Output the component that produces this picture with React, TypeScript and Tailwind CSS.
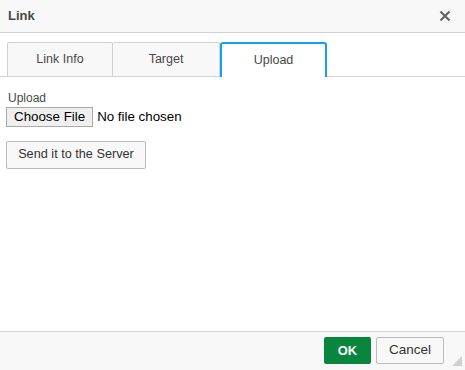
import React from "react";

export default function App() {
  return (
    <div
      className="w-[465px] h-[370px] bg-white flex flex-col text-[#484848] overflow-hidden"
      style={{ fontFamily: '"Liberation Sans", Arial, sans-serif' }}
    >
      <div className="h-[33px] bg-[#f8f8f8] border-b border-[#d1d1d1] flex items-center justify-between pl-[8px] pr-[14px] shrink-0">
        <span className="text-[13px] font-bold text-[#484848]">Link</span>
        <svg width="12" height="12" viewBox="0 0 12 12">
          <path d="M1.5 1.5 L10.5 10.5 M10.5 1.5 L1.5 10.5" stroke="#666" strokeWidth="2.2" />
        </svg>
      </div>
      <div className="flex items-end pt-[9px] pl-[7px] border-b border-[#d1d1d1] h-[44px] shrink-0">
        <div className="w-[106px] h-[34px] bg-[#f8f8f8] border border-b-0 border-[#d1d1d1] rounded-t-[2px] flex items-center justify-center text-[12.5px]">
          Link Info
        </div>
        <div className="w-[107px] h-[34px] bg-[#f8f8f8] border border-l-0 border-b-0 border-[#d1d1d1] rounded-t-[2px] flex items-center justify-center text-[12.5px]">
          Target
        </div>
        <div className="w-[107px] h-[35px] -mb-px bg-white border-2 border-b-0 border-[#139ff7] rounded-t-[3px] flex items-center justify-center text-[12.5px]">
          Upload
        </div>
      </div>
      <div className="flex-1 px-[6px] pt-[14px]">
        <div className="text-[12px] pl-[2px] leading-[14px]">Upload</div>
        <div className="flex items-center mt-[2px]">
          <div className="h-[20px] px-[7px] bg-[#efefef] border border-[#a9a9a9] flex items-center text-[13.33px] text-black leading-none">
            Choose File
          </div>
          <span className="ml-[4px] text-[13.33px] text-black">No file chosen</span>
        </div>
        <div className="mt-[14px] w-[140px] h-[28px] bg-[#f8f8f8] border border-[#bcbcbc] rounded-[2px] flex items-center justify-center text-[12.7px] text-[#333]">
          Send it to the Server
        </div>
      </div>
      <div className="h-[39px] bg-[#f8f8f8] border-t border-[#d1d1d1] shrink-0 relative flex items-start justify-end pt-[5px] pr-[21px] gap-[5px]">
        <div className="w-[47px] h-[27px] bg-[#09863e] rounded-[2px] flex items-center justify-center text-white text-[13px] font-bold">
          OK
        </div>
        <div className="w-[68px] h-[27px] bg-[#f8f8f8] border border-[#bcbcbc] rounded-[2px] flex items-center justify-center text-[13.5px] text-[#333]">
          Cancel
        </div>
        <svg className="absolute right-[3px] bottom-[4px]" width="10" height="10" viewBox="0 0 10 10">
          <path d="M10 0 L10 10 L0 10 Z" fill="#d0d0d0" />
        </svg>
      </div>
    </div>
  );
}
